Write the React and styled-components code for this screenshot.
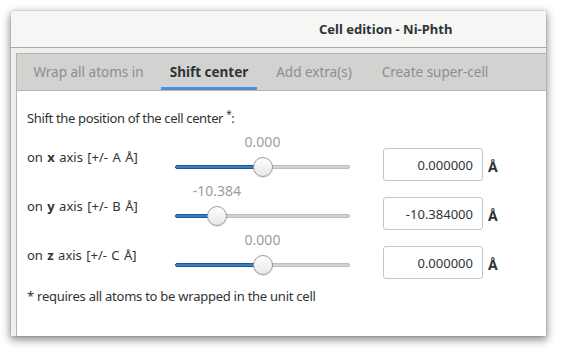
import React from 'react'
import styled, { createGlobalStyle } from 'styled-components'

const GlobalStyle = createGlobalStyle`
  html, body {
    margin: 0;
    background: #ffffff;
    font-family: 'Noto Sans', 'DejaVu Sans', sans-serif;
    color: #2e3436;
  }
`

const Stage = styled.div`
  width: 565px;
  height: 355px;
  padding: 11px 0 0 11px;
  box-sizing: border-box;
  overflow: hidden;
`

const Window = styled.div`
  width: 535px;
  height: 325px;
  display: flex;
  flex-direction: column;
  border-radius: 4px 0 0 0;
  background: #efefee;
  box-shadow: 0 3px 9px 1px rgba(0, 0, 0, 0.45), 0 0 0 1px rgba(0, 0, 0, 0.06);
`

const HeaderBar = styled.header`
  flex: none;
  height: 36px;
  display: flex;
  align-items: center;
  padding-left: 308px;
  border-radius: 4px 0 0 0;
  background: #f6f6f5;
  border-bottom: 1px solid #a8a8a5;
  font-size: 13px;
  font-weight: 700;
  color: #2e3436;
`

const Body = styled.div`
  flex: 1;
  display: flex;
  padding: 5px 0 0 5px;
`

const Notebook = styled.div`
  flex: 1;
  display: flex;
  flex-direction: column;
  border-left: 1px solid #b4b4b1;
  background: #ffffff;
`

const TabBar = styled.nav`
  flex: none;
  height: 38px;
  box-sizing: border-box;
  display: flex;
  gap: 8px;
  padding-left: 7px;
  background: #d2d2d0;
  border-top: 1px solid #b4b4b1;
  border-bottom: 1px solid #b4b4b1;
`

const Tab = styled.div`
  width: ${(p) => p.$w}px;
  flex: none;
  display: flex;
  align-items: center;
  justify-content: center;
  box-sizing: border-box;
  padding-top: 2px;
  border-bottom: 3px solid ${(p) => (p.$active ? '#4a90d9' : 'transparent')};
  font-size: 13.5px;
  font-weight: ${(p) => (p.$active ? 700 : 400)};
  color: ${(p) => (p.$active ? '#2e3436' : '#8b8e8f')};
  white-space: nowrap;
`

const Content = styled.section`
  padding: 18px 0 0 10px;
  font-size: 13px;
  line-height: 18px;
`

const Intro = styled.p`
  margin: 0 0 5px;
  letter-spacing: -0.35px;
  sup {
    font-size: 10px;
    line-height: 0;
    vertical-align: 5px;
  }
`

const Row = styled.div`
  display: grid;
  grid-template-columns: 148px 175px 33px 100px auto;
  height: 49px;
`

const AxisLabel = styled.div`
  padding-top: 16px;
  white-space: nowrap;
  word-spacing: 1px;
  b {
    font-weight: 700;
  }
`

const SliderBox = styled.div`
  display: flex;
  flex-direction: column;
`

const ValueLine = styled.div`
  position: relative;
  height: 20px;
  margin-bottom: 5px;
`

const ValueText = styled.span`
  position: absolute;
  top: 0;
  transform: translateX(-50%);
  font-size: 14px;
  line-height: 20px;
  color: #9a9d9d;
  white-space: nowrap;
`

const Track = styled.div`
  position: relative;
  height: 20px;
  &::before {
    content: '';
    position: absolute;
    left: 0;
    right: 0;
    top: 8px;
    height: 4px;
    box-sizing: border-box;
    border-radius: 2px;
    background: #d3d3d1;
    border: 1px solid #bdbdba;
  }
`

const Fill = styled.div`
  position: absolute;
  left: 0;
  top: 8px;
  height: 4px;
  box-sizing: border-box;
  border-radius: 2px;
  background: #3d7cc9;
  border: 1px solid #1f569a;
`

const Knob = styled.div`
  position: absolute;
  top: 0;
  width: 20px;
  height: 20px;
  margin-left: -10px;
  box-sizing: border-box;
  border-radius: 50%;
  border: 1px solid #9c9c99;
  background: linear-gradient(#fdfdfd, #e8e8e7);
  box-shadow: 0 1px 1px rgba(0, 0, 0, 0.12);
`

const Entry = styled.input`
  grid-column: 4;
  margin: 16px 0 0;
  width: 100px;
  height: 33px;
  box-sizing: border-box;
  padding: 0 9px 0 6px;
  border: 1px solid #c9c6c2;
  border-radius: 3px;
  background: #ffffff;
  font-family: 'Noto Sans', 'DejaVu Sans', sans-serif;
  font-size: 13px;
  color: #2e3436;
  text-align: right;
  outline: none;
`

const Unit = styled.span`
  padding: 26px 0 0 5px;
  font-size: 14px;
  line-height: 18px;
  font-weight: 700;
  color: #2e3436;
`

const Footnote = styled.p`
  margin: 8px 0 0;
  letter-spacing: -0.25px;
`

const Slider = ({ value, limit }) => {
  const span = 155
  const pos = 10 + span * (0.5 + value / (2 * limit))
  return (
    <SliderBox>
      <ValueLine>
        <ValueText style={{ left: pos }}>{value.toFixed(3)}</ValueText>
      </ValueLine>
      <Track>
        <Fill style={{ width: pos }} />
        <Knob style={{ left: pos }} />
      </Track>
    </SliderBox>
  )
}

const tabs = [
  { label: 'Wrap all atoms in', w: 129 },
  { label: 'Shift center', w: 96, active: true },
  { label: 'Add extra(s)', w: 98 },
  { label: 'Create super-cell', w: 128 }
]

const axes = [
  { axis: 'x', cell: 'A', value: 0, limit: 20 },
  { axis: 'y', cell: 'B', value: -10.384, limit: 17.66 },
  { axis: 'z', cell: 'C', value: 0, limit: 20 }
]

const App = () => (
  <Stage>
    <GlobalStyle />
    <Window>
      <HeaderBar>Cell edition - Ni-Phth</HeaderBar>
      <Body>
        <Notebook>
          <TabBar>
            {tabs.map((t) => (
              <Tab key={t.label} $w={t.w} $active={t.active}>
                {t.label}
              </Tab>
            ))}
          </TabBar>
          <Content>
            <Intro>
              Shift the position of the cell center <sup>*</sup>:
            </Intro>
            {axes.map((a) => (
              <Row key={a.axis}>
                <AxisLabel>
                  on <b>{a.axis}</b> axis [+/- {a.cell} Å]
                </AxisLabel>
                <Slider value={a.value} limit={a.limit} />
                <Entry readOnly value={a.value.toFixed(6)} />
                <Unit>Å</Unit>
              </Row>
            ))}
            <Footnote>* requires all atoms to be wrapped in the unit cell</Footnote>
          </Content>
        </Notebook>
      </Body>
    </Window>
  </Stage>
)

export default App
